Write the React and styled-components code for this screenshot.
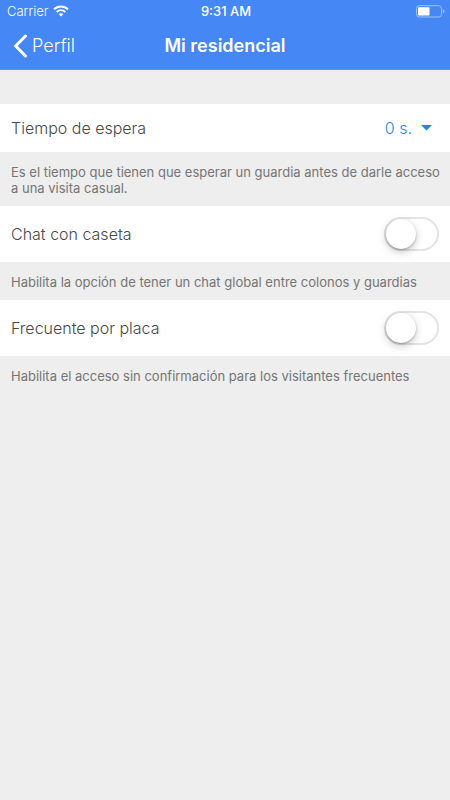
import { useState } from "react";
import styled, { createGlobalStyle } from "styled-components";

const GlobalStyle = createGlobalStyle`
  * {
    box-sizing: border-box;
  }
  body {
    margin: 0;
    min-height: 100vh;
    background-color: #eeeeee;
    color: #484848;
    font-family: "Inter", "Liberation Sans", sans-serif;
  }
`;

const HeaderComp = styled.header`
  height: 70px;
  margin-bottom: 34px;
  background-color: #4587f4;
  border-bottom: 1px solid #5b92ea;
  color: #fff;
`;

const StatusBar = styled.div`
  display: grid;
  grid-template-columns: 1fr auto 1fr;
  align-items: center;
  height: 22px;
  padding: 0 5px 0 7px;
  font-size: 13px;
  line-height: 16px;

  .carrier {
    display: flex;
    align-items: center;
    gap: 5px;
    font-weight: 300;
  }
  .time {
    font-weight: 500;
  }
  .battery {
    justify-self: end;
  }
  svg {
    display: block;
  }
`;

const NavBar = styled.nav`
  display: grid;
  grid-template-columns: 1fr auto 1fr;
  align-items: center;
  height: 48px;
  padding: 0 13px;
`;

const BackLink = styled.a`
  display: flex;
  align-items: center;
  gap: 4px;
  color: #fff;
  font-size: 18px;
  line-height: 24px;
  font-weight: 300;
  text-decoration: none;
`;

const Title = styled.h1`
  margin: 0;
  font-size: 18px;
  line-height: 24px;
  font-weight: 600;
`;

const Row = styled.div`
  display: flex;
  align-items: center;
  justify-content: space-between;
  height: ${(props) => (props.$tall ? "56px" : "48px")};
  padding: 0 11px;
  background-color: #fff;
  font-size: 16px;
  line-height: 24px;
  font-weight: 300;
`;

const Note = styled.p`
  margin: 0;
  padding: 12px 4px 10px 11px;
  color: #757575;
  font-size: 13px;
  line-height: 16px;
  font-weight: 400;
`;

const SelectBox = styled.div`
  display: flex;
  align-items: center;
  gap: 9px;
  padding-right: 7px;
  color: #1b8edb;

  select {
    appearance: none;
    margin: 0;
    padding: 0;
    border: 0;
    background: transparent;
    color: inherit;
    font: inherit;
    field-sizing: content;
    cursor: pointer;
  }
  svg {
    display: block;
    pointer-events: none;
  }
`;

const Switch = styled.input`
  appearance: none;
  display: flex;
  align-items: center;
  width: 55px;
  height: 34px;
  margin: 0;
  border: 2px solid #e4e4e4;
  border-radius: 17px;
  background-color: #fff;
  cursor: pointer;

  &::before {
    content: "";
    width: 30px;
    height: 30px;
    border-radius: 50%;
    background-color: #fff;
    box-shadow: 0 3px 8px rgba(0, 0, 0, 0.22), 0 1px 2px rgba(0, 0, 0, 0.25);
    transition: margin 0.2s;
  }
  &:checked {
    border-color: #4587f4;
    background-color: #4587f4;
  }
  &:checked::before {
    margin-left: auto;
  }
`;

const WifiIcon = () => (
  <svg width="16" height="12" viewBox="0 0 16 12" fill="none" stroke="#fff">
    <path d="M1 4.3C5 0.4 11 0.4 15 4.3" strokeWidth="2" />
    <path d="M3.6 7C6.2 4.6 9.8 4.6 12.4 7" strokeWidth="1.8" />
    <path d="M5.6 9.1C7 7.8 9 7.8 10.4 9.1L8 11.5Z" fill="#fff" stroke="none" />
  </svg>
);

const BatteryIcon = () => (
  <svg className="battery" width="29" height="13" viewBox="0 0 29 13">
    <rect
      x="0.5"
      y="0.7"
      width="25"
      height="11.3"
      rx="2.8"
      fill="none"
      stroke="#a2c3fa"
    />
    <rect x="2" y="2.2" width="11.5" height="8.3" rx="1" fill="#fff" />
    <path d="M27 4.3C29 5 29 7.7 27 8.4Z" fill="#a2c3fa" />
  </svg>
);

const BackIcon = () => (
  <svg width="15" height="24" viewBox="0 0 15 24">
    <path
      d="M12.5 2L2.7 12L12.5 22"
      fill="none"
      stroke="#fff"
      strokeWidth="3"
      strokeLinecap="round"
      strokeLinejoin="miter"
    />
  </svg>
);

const SwitchRow = ({ id, label }) => {
  const [checked, setChecked] = useState(false);

  return (
    <Row $tall>
      <label htmlFor={id}>{label}</label>
      <Switch
        id={id}
        type="checkbox"
        role="switch"
        checked={checked}
        onChange={(e) => setChecked(e.target.checked)}
      />
    </Row>
  );
};

const App = () => {
  const [wait, setWait] = useState("0");

  return (
    <>
      <GlobalStyle />
      <HeaderComp>
        <StatusBar>
          <span className="carrier">
            Carrier
            <WifiIcon />
          </span>
          <span className="time">9:31 AM</span>
          <BatteryIcon />
        </StatusBar>
        <NavBar>
          <BackLink href="#perfil">
            <BackIcon />
            Perfil
          </BackLink>
          <Title>Mi residencial</Title>
        </NavBar>
      </HeaderComp>
      <main>
        <Row>
          <label htmlFor="wait">Tiempo de espera</label>
          <SelectBox>
            <select
              id="wait"
              value={wait}
              onChange={(e) => setWait(e.target.value)}
            >
              <option value="0">0 s.</option>
            </select>
            <svg width="11" height="6" viewBox="0 0 11 6">
              <path d="M0 0H11L5.5 5.5Z" fill="#1b8edb" />
            </svg>
          </SelectBox>
        </Row>
        <Note>
          Es el tiempo que tienen que esperar un guardia antes de darle acceso a
          una visita casual.
        </Note>
        <SwitchRow id="chat" label="Chat con caseta" />
        <Note>
          Habilita la opción de tener un chat global entre colonos y guardias
        </Note>
        <SwitchRow id="plate" label="Frecuente por placa" />
        <Note>
          Habilita el acceso sin confirmación para los visitantes frecuentes
        </Note>
      </main>
    </>
  );
};

export default App;
